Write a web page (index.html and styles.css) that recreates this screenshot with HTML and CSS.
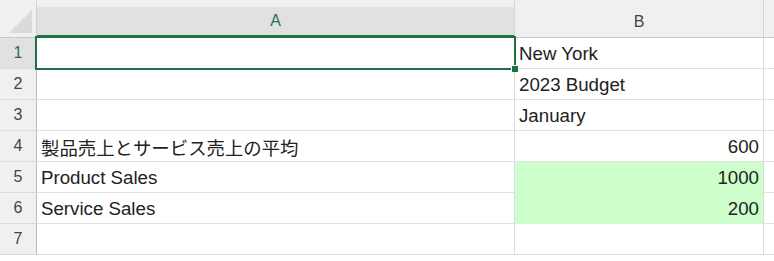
FILE: index.html
```html
<!DOCTYPE html>
<html lang="ja">
<head>
    <meta charset="UTF-8">
    <title>Sheet1</title>
    <link rel="stylesheet" href="styles.css">
</head>
<body>
    <div class="sheet">
        <div class="corner"><span class="tri"></span></div>
        <div class="col-head active"><span>A</span></div>
        <div class="col-head">B</div>
        <div class="col-head last"></div>

        <div class="row-head active">1</div>
        <div class="cell sel"><span class="sel-box"><i></i></span></div>
        <div class="cell">New York</div>
        <div class="cell last"></div>

        <div class="row-head">2</div>
        <div class="cell"></div>
        <div class="cell">2023 Budget</div>
        <div class="cell last"></div>

        <div class="row-head">3</div>
        <div class="cell"></div>
        <div class="cell">January</div>
        <div class="cell last"></div>

        <div class="row-head">4</div>
        <div class="cell jp">製品売上とサービス売上の平均</div>
        <div class="cell num">600</div>
        <div class="cell last"></div>

        <div class="row-head">5</div>
        <div class="cell">Product Sales</div>
        <div class="cell num fill">1000</div>
        <div class="cell last"></div>

        <div class="row-head">6</div>
        <div class="cell">Service Sales</div>
        <div class="cell num fill">200</div>
        <div class="cell last"></div>

        <div class="row-head">7</div>
        <div class="cell"></div>
        <div class="cell"></div>
        <div class="cell last"></div>
    </div>
</body>
</html>
```

FILE: styles.css
```css
* {
    margin: 0;
    padding: 0;
    box-sizing: border-box;
}

body {
    background: #ffffff;
    font-family: 'Liberation Sans', 'Noto Sans CJK JP', sans-serif;
    color: #222;
}

.sheet {
    display: grid;
    grid-template-columns: 37px 478px 249px 1fr;
    grid-template-rows: 38px repeat(7, 31px);
}

.corner {
    position: relative;
    background: #f0f0f0;
    border-right: 1px solid #d4d4d4;
    border-bottom: 1px solid #c8c8c8;
}

.corner .tri {
    position: absolute;
    right: 4px;
    bottom: 4px;
    width: 0;
    height: 0;
    border-left: 23px solid transparent;
    border-bottom: 23px solid #dadada;
}

.col-head {
    background: #f0f0f0;
    border-right: 1px solid #d6d6d6;
    border-bottom: 1px solid #c8c8c8;
    display: flex;
    align-items: center;
    justify-content: center;
    padding-top: 6px;
    font-size: 16px;
    color: #444;
}

.col-head.last {
    border-right: none;
}

.col-head.active {
    padding-top: 7px;
    align-items: stretch;
}

.col-head.active span {
    flex: 1;
    display: flex;
    align-items: center;
    justify-content: center;
    background: #e1e1e1;
    border-bottom: 2px solid #217346;
    color: #217346;
}

.row-head {
    background: #f0f0f0;
    border-right: 1px solid #bdbdbd;
    border-bottom: 1px solid #dcdcdc;
    display: flex;
    align-items: center;
    justify-content: center;
    font-size: 16px;
    color: #444;
}

.row-head.active {
    background: #e1e1e1;
    color: #217346;
}

.cell {
    position: relative;
    border-right: 1px solid #dcdcdc;
    border-bottom: 1px solid #e1e1e1;
    display: flex;
    align-items: center;
    padding: 1px 4px 0 4px;
    font-size: 18.7px;
    white-space: nowrap;
}

.cell.last {
    border-right: none;
}

.cell.jp {
    font-family: 'Noto Sans CJK JP', sans-serif;
    font-size: 18.4px;
}

.cell.num {
    justify-content: flex-end;
}

.cell.fill {
    background: #ccffcc;
    border-bottom-color: #ccffcc;
}

.sel-box {
    position: absolute;
    z-index: 2;
    top: -2px;
    left: -2px;
    right: -2px;
    bottom: -2px;
    border: 2px solid #1f7145;
}

.sel-box i {
    position: absolute;
    right: -5px;
    bottom: -5px;
    width: 8px;
    height: 8px;
    background: #1f7145;
    border: 1px solid #ffffff;
}
```
